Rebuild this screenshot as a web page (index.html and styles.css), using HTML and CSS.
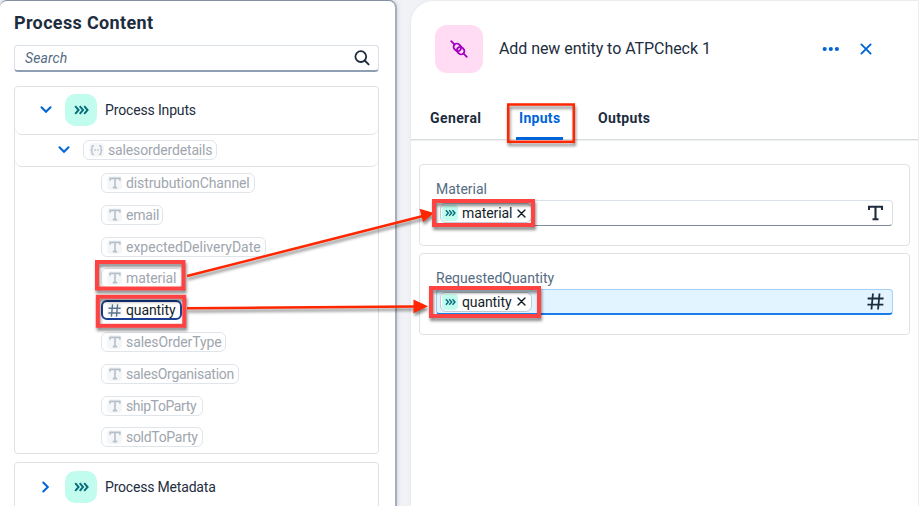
FILE: index.html
```html
<!DOCTYPE html>
<html lang="en">
<head>
<meta charset="utf-8">
<title>Process Content</title>
<link rel="stylesheet" href="styles.css">
</head>
<body>
<svg class="defs" width="0" height="0">
  <defs>
    <symbol id="t" viewBox="0 0 16 16"><path d="M1.500 5V1.800h13V5M8 1.800v12.400M5 14.200h6" fill="none" stroke="currentColor" stroke-width="2.100"/></symbol>
    <symbol id="hash" viewBox="0 0 16 16"><path d="M5.600.5 4.200 15.500M11.800.5l-1.400 15M.6 5.200h15M.4 11h15" fill="none" stroke="currentColor" stroke-width="1.700"/></symbol>
    <symbol id="triple" viewBox="0 0 15 10"><path d="M1.200 1.200 4.600 5 1.200 8.800M5.700 1.200 9.100 5 5.700 8.800M10.200 1.200 13.600 5l-3.400 3.800" fill="none" stroke="currentColor" stroke-width="1.900"/></symbol>
    <symbol id="chev" viewBox="0 0 12 8"><path d="m1.500 1.300 4.500 4.500 4.500-4.500" fill="none" stroke="currentColor" stroke-width="2" stroke-linecap="round"/></symbol>
    <symbol id="x" viewBox="0 0 12 12"><path d="m1.400 1.400 9.200 9.200M10.600 1.400l-9.200 9.200" fill="none" stroke="currentColor" stroke-width="1.900" stroke-linecap="round"/></symbol>
  </defs>
</svg>
<div class="app">
  <section class="content">
    <h1>Process Content</h1>
    <div class="search"><span>Search</span>
      <svg width="16" height="16" viewBox="0 0 16 16"><circle cx="6.800" cy="6.600" r="5.400" fill="none" stroke="#1d2d3e" stroke-width="1.800"/><path d="m10.700 10.500 3.900 3.900" stroke="#1d2d3e" stroke-width="1.900" stroke-linecap="round"/></svg>
    </div>
    <div class="tree">
      <div class="group"><svg class="chev" width="12" height="8"><use href="#chev"/></svg><span class="badge"><svg width="15" height="10"><use href="#triple"/></svg></span><span class="name">Process Inputs</span></div>
      <div class="sub"><svg class="chev" width="12" height="8"><use href="#chev"/></svg><span class="chip sod"><i><svg width="13" height="10" viewBox="0 0 13 10"><path d="M4 .7H3Q2 .7 2 2v1.500Q2 5 .7 5 2 5 2 6.500V8q0 1.300 1 1.300h1M9 .7h1q1 0 1 1.300v1.500Q11 5 12.300 5 11 5 11 6.500V8q0 1.300-1 1.300H9M4.300 5h1.500M7.200 5h1.500" fill="none" stroke="currentColor" stroke-width="1.300"/></svg></i><b>salesorderdetails</b></span></div>
      <div class="items">
        <span class="chip c1"><i><svg width="12" height="12"><use href="#t"/></svg></i><b>distrubutionChannel</b></span>
        <span class="chip c2"><i><svg width="12" height="12"><use href="#t"/></svg></i><b>email</b></span>
        <span class="chip c3"><i><svg width="12" height="12"><use href="#t"/></svg></i><b>expectedDeliveryDate</b></span>
        <span class="chip c4"><i><svg width="12" height="12"><use href="#t"/></svg></i><b>material</b></span>
        <span class="chip c5 active"><i><svg width="13" height="13"><use href="#hash"/></svg></i><b>quantity</b></span>
        <span class="chip c6"><i><svg width="12" height="12"><use href="#t"/></svg></i><b>salesOrderType</b></span>
        <span class="chip c7"><i><svg width="12" height="12"><use href="#t"/></svg></i><b>salesOrganisation</b></span>
        <span class="chip c8"><i><svg width="12" height="12"><use href="#t"/></svg></i><b>shipToParty</b></span>
        <span class="chip c9"><i><svg width="12" height="12"><use href="#t"/></svg></i><b>soldToParty</b></span>
      </div>
    </div>
    <div class="tree second">
      <div class="group"><svg class="chev closed" width="12" height="8"><use href="#chev"/></svg><span class="badge"><svg width="15" height="10"><use href="#triple"/></svg></span><span class="name meta">Process Metadata</span></div>
    </div>
  </section>
  <section class="detail">
    <header>
      <span class="entity"><svg width="20" height="20" viewBox="0 0 20 20"><g transform="rotate(45 10 10)" fill="none" stroke="#a100c2" stroke-width="1.800"><path d="M-1 10h4.500M16.500 10H21" stroke-linecap="round"/><path d="M8.300 6.700H7a3.300 3.300 0 0 0 0 6.600h1.300a3.300 3.300 0 0 0 0-6.600z"/><path d="M11.700 6.700H13a3.300 3.300 0 0 1 0 6.600h-1.300a3.300 3.300 0 0 1 0-6.600z"/></g></svg></span>
      <h2>Add new entity to ATPCheck 1</h2>
      <svg class="more" width="18" height="6" viewBox="0 0 18 6"><circle cx="2.700" cy="3" r="2.100"/><circle cx="8.800" cy="3" r="2.100"/><circle cx="14.900" cy="3" r="2.100"/></svg>
      <svg class="close" width="12" height="12"><use href="#x"/></svg>
    </header>
    <nav><span class="tab-g">General</span><span class="tab-i">Inputs</span><span class="tab-o">Outputs</span></nav>
    <main>
      <div class="card"><label class="l1">Material</label>
        <div class="field"><span class="token tm"><i><svg width="11" height="8"><use href="#triple"/></svg></i><b>material</b><svg width="9" height="9"><use href="#x"/></svg></span><svg class="kind" width="17" height="16" viewBox="0 0 16 16"><use href="#t"/></svg></div>
      </div>
      <div class="card"><label class="l2">RequestedQuantity</label>
        <div class="field focus"><span class="token tq"><i><svg width="11" height="8"><use href="#triple"/></svg></i><b>quantity</b><svg width="9" height="9"><use href="#x"/></svg></span><svg class="kind" width="17" height="17"><use href="#hash"/></svg></div>
      </div>
    </main>
  </section>
</div>
<svg class="marks" width="919" height="506" viewBox="0 0 919 506">
  <g fill="none" stroke="#ff2600" stroke-width="2.500">
    <rect x="508.200" y="104.500" width="65.600" height="37.300"/>
    <path d="m187 276 236-60M187 308.300l228-1.800"/>
  </g>
  <path d="m434 213-14.500-4.300 3.600 13.300zM428 306.300l-14.500-6.800v13.800z" fill="#ff2600"/>
  <g fill="none" stroke="#ff4343" stroke-width="4">
    <rect x="97" y="262" width="86.500" height="26.500"/>
    <rect x="97.800" y="296.800" width="86.500" height="29"/>
    <rect x="434" y="201" width="99" height="24"/>
    <rect x="431" y="288" width="108" height="28"/>
  </g>
</svg>
</body>
</html>
```
FILE: styles.css
```css
* { box-sizing: border-box; }
body { margin: 0; background: #f1f2f5; font-family: Roboto, "Noto Sans", sans-serif; color: #1d2d3e; font-size: 14px; overflow: hidden; }
svg { display: block; flex: none; }
i, b { font-style: normal; font-weight: 400; }
.defs { position: absolute; }
.app { display: flex; height: 506px; gap: 14px; overflow: hidden; }
.content { width: 397px; height: 516px; flex: none; background: #fff; border: 2px solid #a5b0bf; border-top: 1px solid #8490a1; border-left: 0; border-radius: 7px 8px 0 0; padding: 0 16px 0 14px; box-shadow: 0 0 5px #c8ccd2; }
h1 { margin: 0; height: 44px; line-height: 43px; font-size: 18px; font-weight: 700; white-space: nowrap; letter-spacing: .35px; }
.search { width: 365px; height: 27px; border: 1px solid #d9e0e7; border-bottom: 2px solid #8f9fb3; border-radius: 4px; display: flex; align-items: center; justify-content: space-between; padding: 0 8px 0 10px; font-style: italic; color: #556b82; }
.search span { letter-spacing: .1px; }
.tree { width: 365px; height: 368px; margin-top: 14px; border: 1.500px solid #dfe1e4; border-radius: 4px; }
.tree.second { height: 80px; margin-top: 8px; }
.group { height: 48px; display: flex; align-items: center; padding: 0 0 1px 25px; border-bottom: 1px solid #e0e4e9; border-radius: 0 0 7px 7px; }
.second .group { border: 0; }
.chev { color: #0064d9; }
.closed { transform: rotate(-90deg); }
.badge { width: 32px; height: 32px; border-radius: 10px; background: #c2fcee; color: #046c7a; display: flex; align-items: center; justify-content: center; margin: 0 8px 0 13px; }
.name { white-space: nowrap; letter-spacing: -.15px; }
.meta { letter-spacing: -.19px; }
.sub { height: 32px; display: flex; align-items: center; padding: 0 0 1px 43px; border-bottom: 1px solid #e0e4e9; border-radius: 0 0 7px 7px; }
.chip { height: 20px; border: 1px solid #dfe5eb; border-radius: 6px; display: flex; align-items: center; padding-left: 5px; color: #a0a6ae; white-space: nowrap; }
.chip i { width: 15px; height: 14px; border-radius: 4px; background: #f5f6f7; color: #b4bfcb; display: flex; align-items: center; justify-content: center; margin-right: 4px; flex: none; }
.sod { width: 134px; margin-left: 13px; }
.sod b { letter-spacing: -.15px; }
.items { padding: 6px 0 0 86px; display: flex; flex-direction: column; gap: 11.800px; }
.c1 { width: 154px; letter-spacing: -.1px; } .c2 { width: 62px; letter-spacing: -.2px; } .c3 { width: 165px; } .c4 { width: 82px; letter-spacing: -.1px; } .c5 { width: 81px; letter-spacing: -.1px; }
.c6 { width: 125px; letter-spacing: -.1px; } .c7 { width: 138px; letter-spacing: -.25px; } .c8 { width: 102px; letter-spacing: -.5px; letter-spacing: -.4px; } .c9 { width: 102px; letter-spacing: -.3px; }
.chip.active { color: #131e29; border: 2px solid #1b3f93; padding-left: 4px; }
.active i { color: #5b738b; }
.detail { width: 507px; height: 505px; margin-top: 1px; flex: none; background: #fff; border-radius: 22px 0 0 0; box-shadow: 0 0 3px #dce2e8; }
header { height: 95px; display: flex; align-items: center; padding: 0 46px 0 24px; }
.entity { width: 48px; height: 48px; border-radius: 12px; background: #ffdcf3; display: flex; align-items: center; justify-content: center; margin-right: 16px; }
h2 { margin: 0; font-size: 16px; font-weight: 400; white-space: nowrap; width: 324px; letter-spacing: -.05px; }
.more { fill: #0064d9; } .close { color: #0064d9; margin-left: 20px; }
nav { height: 44px; display: flex; padding-left: 19px; border-bottom: 1px solid #d9dcdf; font-weight: 700; line-height: 45px; white-space: nowrap; box-shadow: 0 1px 1px #eef0f2; }
nav span { height: 44px; }
.tab-g { width: 86px; letter-spacing: .4px; } .tab-i { width: 47px; margin-right: 35px; padding-left: 3px; color: #0064d9; border-bottom: 3px solid #0064d9; letter-spacing: .3px; } .tab-o { letter-spacing: .35px; }
main { padding: 24px 8px 0; display: flex; flex-direction: column; gap: 7px; }
.card { height: 82px; border: 1.500px solid #e0e2e4; border-radius: 4px; padding: 15px 16px 0; }
label { display: block; height: 20px; line-height: 18px; color: #556b82; white-space: nowrap; }
.field { height: 26px; border: 1px solid #d9e0e7; border-bottom: 1.500px solid #7d8ca0; border-radius: 4px; display: flex; align-items: center; justify-content: space-between; padding: 0 8px 0 3px; }
.focus { background: #e1f4ff; border-color: #a6d0f8; border-bottom: 2px solid #1b7cec; }
.token { height: 20px; width: 92px; border: 1px solid #c1cbd6; border-radius: 6px; background: #fff; display: flex; align-items: center; white-space: nowrap; padding-left: 1px; color: #131e29; }
.token i { width: 16px; height: 16px; border-radius: 4px; background: #c2fcee; color: #046c7a; display: flex; align-items: center; justify-content: center; margin-right: 4px; flex: none; }
.token b { width: 55px; flex: none; letter-spacing: -.1px; }
.marks { position: absolute; left: 0; top: 0; pointer-events: none; filter: drop-shadow(1px 3px 1.500px rgba(0,0,0,.45)); }
```
